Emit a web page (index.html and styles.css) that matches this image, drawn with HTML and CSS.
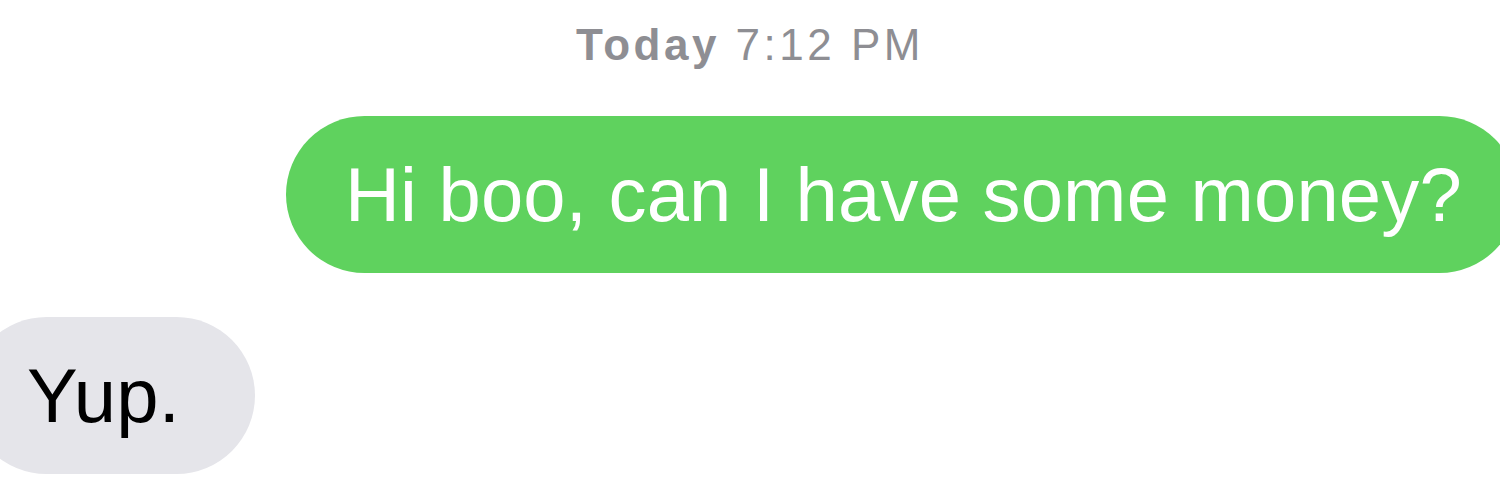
FILE: index.html
```html
<!DOCTYPE html>
<html lang="en">
  <head>
    <meta charset="UTF-8" />
    <meta name="viewport" content="width=device-width, initial-scale=1.0" />
    <title>Messages</title>
    <link rel="stylesheet" href="styles.css">
  </head>
  <body>
    <div class="thread">
      <div class="stamp"><b>Today</b> 7:12 PM</div>
      <div class="bubble sent">Hi boo, can I have some money?</div>
      <div class="bubble received">Yup.</div>
    </div>
  </body>
</html>
```

FILE: styles.css
```css
body,
html {
  margin: 0;
  padding: 0;
  width: 100%;
  height: 100%;
  overflow: hidden;
  background: #ffffff;
  font-family: "Liberation Sans", Arial, sans-serif;
}

.thread {
  display: flex;
  flex-direction: column;
}

.stamp {
  padding-top: 23px;
  margin-bottom: 49px;
  font-size: 44px;
  line-height: 44px;
  letter-spacing: 3.5px;
  text-align: center;
  color: #8e8e93;
}

.stamp b {
  font-weight: 700;
}

.bubble {
  font-size: 76px;
  line-height: 91px;
  letter-spacing: 0.2px;
  padding: 33px 56px 33px 59px;
  border-radius: 79px;
  white-space: nowrap;
}

.sent {
  align-self: flex-end;
  margin-right: -18px;
  background: #5fd25e;
  color: #ffffff;
}

.received {
  align-self: flex-start;
  margin-top: 44px;
  margin-left: -32px;
  padding-right: 75px;
  background: #e5e5ea;
  color: #000000;
}
```
